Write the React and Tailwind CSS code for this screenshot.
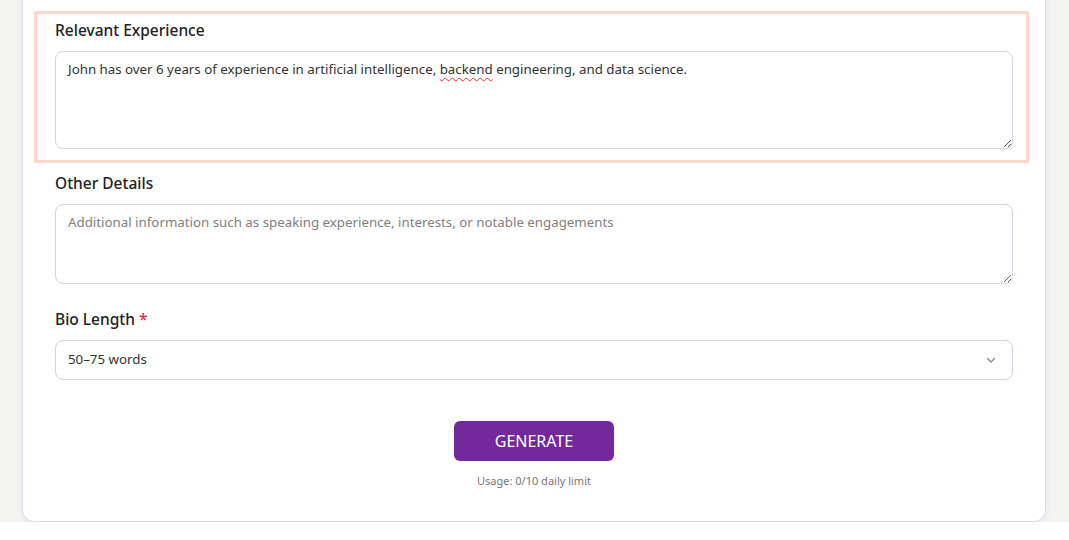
import React from "react";

export default function App() {
  return (
    <div
      className="min-h-[540px] w-full bg-[#f4f4f3] text-[#222]"
      style={{ fontFamily: '"Noto Sans", "Open Sans", sans-serif' }}
    >
      <div className="ml-[22px] mr-[23px] -mt-[20px] rounded-b-[12px] rounded-t-none border border-[#e3d8ec] bg-white pt-[30px] pb-[32px] shadow-[0_2px_8px_rgba(0,0,0,0.06)]">
        <div className="ml-[11px] mr-[16px] border-[3px] border-[#fed6cc] pl-[18px] pr-[13px] pt-[4px] pb-[11px]">
          <label className="block text-[15.5px] font-medium leading-[24px]">Relevant Experience</label>
          <div className="mt-[9px] h-[98px] resize-y overflow-auto rounded-[8px] border border-[#dcd0e8] px-[12px] py-[6px] text-[13.3px] leading-[22px] text-[#333]">
            John has over 6 years of experience in artificial intelligence,{" "}
            <span className="underline decoration-wavy decoration-[#e33] decoration-1 underline-offset-[3px]">backend</span>{" "}
            engineering, and data science.
          </div>
        </div>

        <div className="mx-[32px] mt-[8px]">
          <label className="block text-[15.5px] font-medium leading-[24px]">Other Details</label>
          <textarea
            className="mt-[9px] block h-[80px] w-full rounded-[8px] border border-[#dcd0e8] px-[12px] py-[6px] text-[13.3px] leading-[22px] text-[#333] outline-none placeholder:text-[#808080]"
            placeholder="Additional information such as speaking experience, interests, or notable engagements"
          />

          <label className="mt-[23px] block text-[15.5px] font-medium leading-[24px]">
            Bio Length <span className="text-[#e5293f]">*</span>
          </label>
          <div className="mt-[9px] flex h-[40px] items-center justify-between rounded-[8px] border border-[#dcd0e8] pl-[12px] pr-[15px] text-[13.3px] text-[#333]">
            <span>50–75 words</span>
            <svg width="12" height="12" viewBox="0 0 24 24" fill="none" stroke="#888" strokeWidth="2.5" strokeLinecap="round" strokeLinejoin="round">
              <path d="M5 9l7 7 7-7" />
            </svg>
          </div>

          <div className="mt-[41px] flex flex-col items-center">
            <button className="h-[40px] w-[160px] rounded-[6px] bg-[#73299c] text-[16px] text-white">
              GENERATE
            </button>
            <div className="mt-[12px] text-[11px] leading-[16px] text-[#777]">Usage: 0/10 daily limit</div>
          </div>
        </div>
      </div>
    </div>
  );
}
